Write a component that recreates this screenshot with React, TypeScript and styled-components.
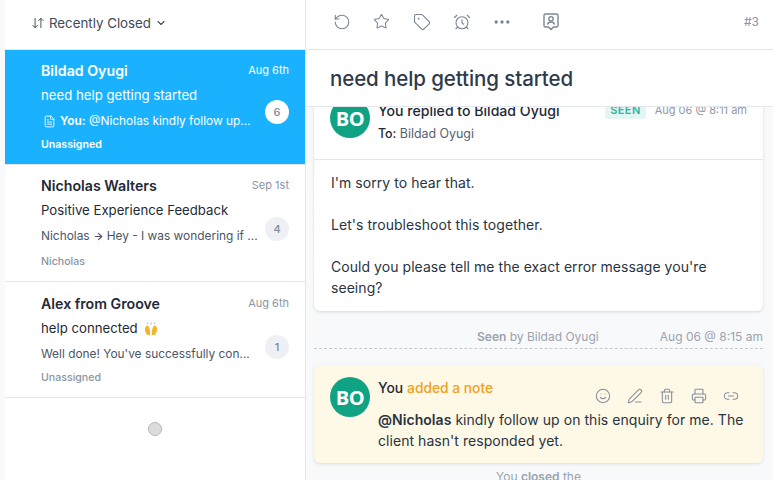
import styled, { createGlobalStyle } from "styled-components";
import {
  AlarmClock,
  ArrowDownUp,
  ArrowRight,
  ChevronDown,
  FileText,
  Link2,
  MoreHorizontal,
  PenLine,
  Printer,
  RotateCcw,
  Smile,
  Star,
  Tag,
  Trash2,
} from "lucide-react";

const GlobalStyle = createGlobalStyle`
  html, body {
    margin: 0;
    height: 100%;
    overflow: hidden;
    background: #f8f9fb;
    font-family: "Inter", "Liberation Sans", sans-serif;
    color: #1f2a37;
  }
  * { box-sizing: border-box; }
`;

const Layout = styled.div`
  display: flex;
  width: 773px;
  height: 480px;
  padding-left: 5px;
  overflow: hidden;
`;

// Left column
const Sidebar = styled.aside`
  width: 301px;
  flex: none;
  background: #fff;
  border-right: 1px solid #e3e6ec;
  display: flex;
  flex-direction: column;
`;

const ListHeader = styled.div`
  height: 50px;
  flex: none;
  padding: 0 0 4px 26px;
  display: flex;
  align-items: center;
  gap: 4px;
  font-size: 13.3px;
  color: #3f4a58;
  border-bottom: 1px solid #e3e6ec;
  svg { flex: none; }
`;

const Item = styled.div<{ $active?: boolean; $height: number; $pad: number }>`
  height: ${(p) => p.$height}px;
  flex: none;
  padding: ${(p) => p.$pad}px 16px 0 36px;
  display: grid;
  grid-template-columns: 1fr 28px;
  column-gap: 3px;
  background: ${(p) => (p.$active ? "#1ab2ff" : "#fff")};
  border-bottom: 1px solid #e3e6ec;
  color: ${(p) => (p.$active ? "#fff" : "#1f2a37")};
`;

const ItemBody = styled.div`
  min-width: 0;
  grid-column: 1 / 3;
  grid-row: 1;
`;

const TopRow = styled.div`
  display: flex;
  justify-content: space-between;
  align-items: center;
  height: 18px;
`;

const Name = styled.span`
  font-size: 14.2px;
  font-weight: 600;
`;

const DateText = styled.span<{ $active?: boolean }>`
  font-size: 11px;
  color: ${(p) => (p.$active ? "#fff" : "#8b95a3")};
`;

const Subject = styled.div`
  font-size: 13.2px;
  margin-top: 7px;
  height: 18px;
  line-height: 18px;
  display: flex;
  align-items: center;
  gap: 6px;
`;

const Preview = styled.div<{ $active?: boolean }>`
  font-size: 11.9px;
  margin-top: 8px;
  height: 18px;
  line-height: 18px;
  width: 222px;
  white-space: nowrap;
  overflow: hidden;
  display: flex;
  align-items: center;
  gap: 3px;
  color: ${(p) => (p.$active ? "#fff" : "#4c5665")};
  b { font-weight: 600; }
  svg { flex: none; }
`;

const Assignee = styled.div<{ $active?: boolean; $gap: number }>`
  font-size: 10.6px;
  margin-top: ${(p) => p.$gap}px;
  font-weight: ${(p) => (p.$active ? 600 : 500)};
  color: ${(p) => (p.$active ? "#fff" : "#8b95a3")};
`;

const Count = styled.div<{ $active?: boolean }>`
  grid-column: 2;
  grid-row: 1;
  align-self: start;
  margin-top: ${(p) => (p.$active ? "39px" : "41px")};
  z-index: 1;
  width: 24px;
  height: 24px;
  justify-self: end;
  border-radius: 50%;
  display: flex;
  align-items: center;
  justify-content: center;
  font-size: 11px;
  font-weight: 500;
  background: ${(p) => (p.$active ? "#fff" : "#eff0f6")};
  color: #808a99;
`;

const Spinner = styled.div`
  width: 14px;
  height: 14px;
  border-radius: 50%;
  background: #dcdcdc;
  border: 1px solid #b4b4b4;
  margin: 24px auto 0;
  flex: none;
`;

// Right column
const Main = styled.main`
  flex: 1;
  min-width: 0;
  display: flex;
  flex-direction: column;
`;

const Toolbar = styled.div`
  height: 50px;
  flex: none;
  background: #fff;
  border-bottom: 1px solid #e3e6ec;
  padding: 0 14px 6px 27px;
  display: flex;
  align-items: center;
  color: #7c8794;
`;

const ToolIcon = styled.span<{ $w: number }>`
  width: ${(p) => p.$w}px;
  display: flex;
  flex: none;
`;

const TicketNo = styled.span`
  margin-left: auto;
  font-size: 12px;
  color: #8b95a3;
`;

const TitleBar = styled.h1`
  height: 57px;
  flex: none;
  margin: 0;
  padding: 1px 0 0 24px;
  display: flex;
  align-items: center;
  background: #fff;
  border-bottom: 1px solid #e3e6ec;
  font-size: 20.5px;
  font-weight: 500;
  letter-spacing: -0.1px;
  color: #2f3a49;
  position: relative;
  z-index: 1;
`;

const Stream = styled.div`
  flex: 1;
  min-height: 0;
  overflow: hidden;
  padding: 0 10px 0 8px;
`;

const Card = styled.section`
  margin-top: -14px;
  height: 218px;
  background: #fff;
  border-radius: 6px;
  box-shadow: 0 1px 3px rgba(40, 50, 70, 0.16);
`;

const CardHead = styled.div`
  height: 67px;
  padding: 5px 16px 0 16px;
  display: flex;
  gap: 8px;
  border-bottom: 1px solid #e3e6ec;
`;

const Avatar = styled.div`
  width: 40px;
  height: 40px;
  flex: none;
  border-radius: 50%;
  background: #0fa383;
  color: #fff;
  display: flex;
  align-items: center;
  justify-content: center;
  font-family: "Open Sans", sans-serif;
  font-size: 20px;
  font-weight: 700;
  letter-spacing: -0.5px;
`;

const HeadText = styled.div`
  flex: 1;
  min-width: 0;
  padding-top: 3px;
`;

const HeadLine = styled.div`
  display: flex;
  align-items: center;
  height: 18px;
  font-size: 14.1px;
  font-weight: 500;
  color: #1f2a37;
`;

const Seen = styled.span`
  margin-left: auto;
  height: 18px;
  padding: 0 5px;
  border-radius: 3px;
  background: #e4f6f3;
  color: #2eb5a5;
  font-size: 11px;
  font-weight: 600;
  letter-spacing: 0.4px;
  line-height: 18px;
`;

const Stamp = styled.span`
  margin-left: 9px;
  font-size: 11px;
  font-weight: 400;
  color: #8f99a6;
`;

const ToLine = styled.div`
  margin-top: 7px;
  font-size: 12.4px;
  color: #566170;
  b { font-weight: 500; color: #1f2a37; }
`;

const CardBody = styled.div`
  padding: 12px 16px 0 17px;
  font-size: 14px;
  line-height: 21px;
  letter-spacing: 0.05px;
  color: #2a3441;
  p { margin: 0 0 21px; }
`;

const SeenRow = styled.div`
  height: 38px;
  border-bottom: 1px dashed #c4cad2;
  display: flex;
  align-items: center;
  justify-content: space-between;
  padding: 14px 0 0 163px;
  font-size: 12px;
  color: #9aa3ae;
  b { font-weight: 600; }
`;

const Note = styled.section`
  margin-top: 16px;
  height: 98px;
  background: #fef8e6;
  border-radius: 6px;
  box-shadow: 0 1px 3px rgba(40, 50, 70, 0.14);
  padding: 12px 16px;
  display: flex;
  gap: 8px;
`;

const NoteText = styled.div`
  flex: 1;
  min-width: 0;
  padding-top: 3px;
`;

const NoteTop = styled.div`
  font-size: 13.8px;
  font-weight: 500;
  height: 28px;
  color: #1f2a37;
  display: flex;
  justify-content: space-between;
`;

const Accent = styled.span`
  color: #efa21d;
  margin-left: 4px;
`;

const NoteTools = styled.div`
  display: flex;
  gap: 16px;
  margin-top: 8px;
  color: #87909f;
  height: 16px;
  padding-right: 8px;
`;

const NoteBody = styled.div`
  font-size: 14px;
  line-height: 21px;
  letter-spacing: 0.05px;
  margin-top: 1px;
  color: #2a3441;
  b { font-weight: 600; }
`;

const ClosedLine = styled.div`
  margin-top: 6px;
  text-align: center;
  font-size: 12px;
  color: #9aa3ae;
  b { font-weight: 600; }
`;

function ContactIcon() {
  return (
    <svg width="16" height="18" viewBox="0 0 16 18" fill="none" stroke="currentColor" strokeWidth="1.4">
      <path d="M2.5 1h11A1.5 1.5 0 0 1 15 2.5v10a1.5 1.5 0 0 1-1.5 1.5H10.500L8 16.500 5.500 14H2.500A1.500 1.500 0 0 1 1 12.500v-10A1.500 1.500 0 0 1 2.500 1z" />
      <circle cx="8" cy="5.800" r="2.200" />
      <path d="M4.500 11.500c.4-1.800 1.700-2.500 3.500-2.500s3.100.7 3.500 2.500" />
    </svg>
  );
}

function RaisedHands() {
  return (
    <svg width="14" height="13" viewBox="0 0 14 13">
      <path d="M1 6l2-3 2 2 1 3v5H3L1 9z" fill="#f5b52e" />
      <path d="M13 6l-2-3-2 2-1 3v5h3l2-4z" fill="#f5b52e" />
      <path d="M3.500 2l.5-1.500M7 2.500V.5M10.500 2L10 .5" stroke="#8f99a6" strokeWidth="0.8" />
    </svg>
  );
}

export default function App() {
  return (
    <>
      <GlobalStyle />
      <Layout>
        <Sidebar>
          <ListHeader>
            <ArrowDownUp size={14} strokeWidth={1.6} />
            <span>Recently Closed</span>
            <ChevronDown size={12} strokeWidth={2.2} />
          </ListHeader>

          <Item $active $height={115} $pad={11}>
            <ItemBody>
              <TopRow>
                <Name>Bildad Oyugi</Name>
                <DateText $active>Aug 6th</DateText>
              </TopRow>
              <Subject>need help getting started</Subject>
              <Preview $active>
                <FileText size={13} strokeWidth={1.6} style={{ marginLeft: 2, marginRight: 1 }} />
                <span>
                  <b>You:</b> @Nicholas kindly follow up...
                </span>
              </Preview>
              <Assignee $active $gap={8}>Unassigned</Assignee>
            </ItemBody>
            <Count $active>6</Count>
          </Item>

          <Item $height={117} $pad={11}>
            <ItemBody>
              <TopRow>
                <Name>Nicholas Walters</Name>
                <DateText>Sep 1st</DateText>
              </TopRow>
              <Subject>Positive Experience Feedback</Subject>
              <Preview>
                Nicholas <ArrowRight size={11} strokeWidth={2.4} color="#5c4a6b" /> Hey - I was wondering if ...
              </Preview>
              <Assignee $gap={10}>Nicholas</Assignee>
            </ItemBody>
            <Count>4</Count>
          </Item>

          <Item $height={116} $pad={12}>
            <ItemBody>
              <TopRow>
                <Name>Alex from Groove</Name>
                <DateText>Aug 6th</DateText>
              </TopRow>
              <Subject>
                help connected <RaisedHands />
              </Subject>
              <Preview>Well done! You've successfully con...</Preview>
              <Assignee $gap={8}>Unassigned</Assignee>
            </ItemBody>
            <Count>1</Count>
          </Item>

          <Spinner />
        </Sidebar>

        <Main>
          <Toolbar>
            <ToolIcon $w={40}><RotateCcw size={18} strokeWidth={1.5} /></ToolIcon>
            <ToolIcon $w={40}><Star size={17} strokeWidth={1.5} /></ToolIcon>
            <ToolIcon $w={40}><Tag size={18} strokeWidth={1.5} /></ToolIcon>
            <ToolIcon $w={39}><AlarmClock size={18} strokeWidth={1.5} /></ToolIcon>
            <ToolIcon $w={51}><MoreHorizontal size={20} strokeWidth={2} /></ToolIcon>
            <ToolIcon $w={20}><ContactIcon /></ToolIcon>
            <TicketNo>#3</TicketNo>
          </Toolbar>

          <TitleBar>need help getting started</TitleBar>

          <Stream>
            <Card>
              <CardHead>
                <Avatar>BO</Avatar>
                <HeadText>
                  <HeadLine>
                    You replied to Bildad Oyugi
                    <Seen>SEEN</Seen>
                    <Stamp>Aug 06 @ 8:11 am</Stamp>
                  </HeadLine>
                  <ToLine>
                    <b>To:</b> Bildad Oyugi
                  </ToLine>
                </HeadText>
              </CardHead>
              <CardBody>
                <p>I'm sorry to hear that.</p>
                <p>Let's troubleshoot this together.</p>
                <p>Could you please tell me the exact error message you're seeing?</p>
              </CardBody>
            </Card>

            <SeenRow>
              <span><b>Seen</b> by Bildad Oyugi</span>
              <span>Aug 06 @ 8:15 am</span>
            </SeenRow>

            <Note>
              <Avatar>BO</Avatar>
              <NoteText>
                <NoteTop>
                  <span>You<Accent>added a note</Accent></span>
                  <NoteTools>
                    <Smile size={16} strokeWidth={1.6} />
                    <PenLine size={16} strokeWidth={1.6} />
                    <Trash2 size={16} strokeWidth={1.6} />
                    <Printer size={16} strokeWidth={1.6} />
                    <Link2 size={16} strokeWidth={1.6} />
                  </NoteTools>
                </NoteTop>
                <NoteBody>
                  <b>@Nicholas</b> kindly follow up on this enquiry for me. The client hasn't responded yet.
                </NoteBody>
              </NoteText>
            </Note>

            <ClosedLine>You <b>closed</b> the</ClosedLine>
          </Stream>
        </Main>
      </Layout>
    </>
  );
}
